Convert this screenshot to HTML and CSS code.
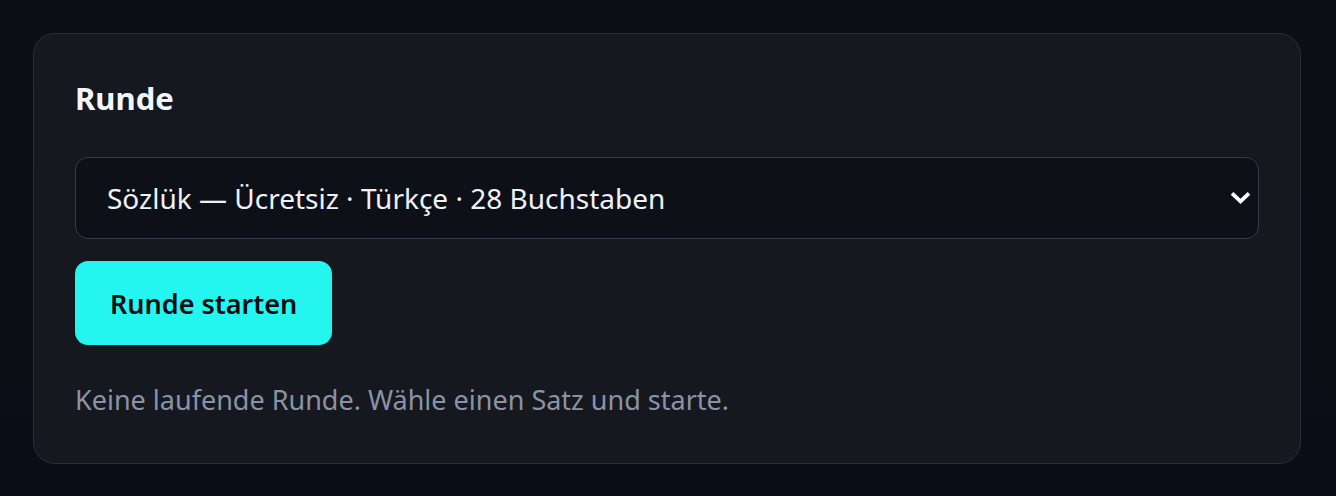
FILE: index.html
```html
<!DOCTYPE html>
<html lang="de">
<head>
<meta charset="utf-8">
<title>Runde</title>
<link rel="stylesheet" href="styles.css">
</head>
<body>
<main class="page">
  <section class="card">
    <h2 class="card-title">Runde</h2>
    <div class="select-wrap">
      <select class="select">
        <option>Sözlük — Ücretsiz · Türkçe · 28 Buchstaben</option>
      </select>
      <svg class="chevron" viewBox="0 0 20 12" aria-hidden="true"><path d="M2.5 2.5 L10 9.5 L17.5 2.5" fill="none" stroke="#ffffff" stroke-width="4" stroke-linecap="square" stroke-linejoin="miter"/></svg>
    </div>
    <div class="actions">
      <button class="btn-start" type="button">Runde starten</button>
    </div>
    <p class="status">Keine laufende Runde. Wähle einen Satz und starte.</p>
  </section>
</main>
</body>
</html>
```

FILE: styles.css
```css
html, body {
  margin: 0;
  padding: 0;
}
body {
  background: linear-gradient(180deg, #0d0f14 0%, #0b0c15 100%);
  min-height: 496px;
  font-family: "Noto Sans", "Open Sans", sans-serif;
  color: #eef1f7;
}
.page {
  padding: 33px 35px 33px 33px;
}
.card {
  background: #161820;
  border: 1px solid #2a2e39;
  border-radius: 22px;
  padding: 44px 41px 45px 41px;
  display: flex;
  flex-direction: column;
}
.card-title {
  margin: 0;
  font-size: 31px;
  font-weight: 700;
  line-height: 40px;
  color: #f2f5fb;
}
.select-wrap {
  position: relative;
  margin-top: 39px;
}
.select {
  appearance: none;
  -webkit-appearance: none;
  display: block;
  width: 100%;
  height: 82px;
  box-sizing: border-box;
  background: #0e1017;
  border: 1.5px solid #343a47;
  border-radius: 13px;
  color: #eef1f7;
  font-family: "Noto Sans", "Open Sans", sans-serif;
  font-size: 28px;
  padding: 0 60px 0 31px;
  outline: none;
}
.chevron {
  position: absolute;
  right: 9px;
  top: 35px;
  width: 19px;
  height: 12px;
  pointer-events: none;
}
.actions {
  margin-top: 22px;
  display: flex;
}
.btn-start {
  background: #24f5ee;
  color: #0b0d12;
  border: none;
  border-radius: 13px;
  height: 84px;
  padding: 0 35px;
  font-family: "Noto Sans", "Open Sans", sans-serif;
  font-size: 27px;
  font-weight: 600;
  cursor: pointer;
}
.status {
  margin: 37px 0 0 0;
  font-size: 27px;
  line-height: 36px;
  color: #8a93a6;
}
```
